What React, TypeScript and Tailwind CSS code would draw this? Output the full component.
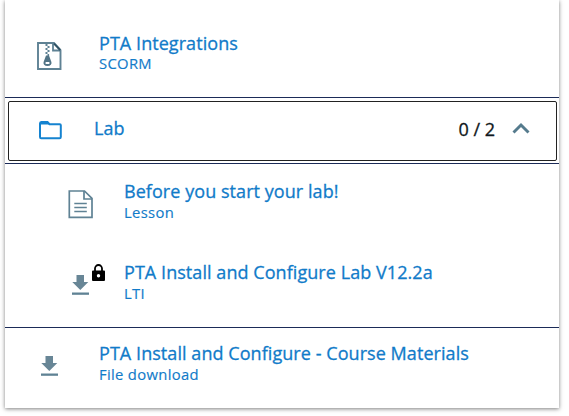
import type { ReactNode } from "react";

const STEEL = "#5f8294";

function ZipIcon() {
  return (
    <svg width="25" height="29" viewBox="0 0 25 29" fill="none" className="block">
      <path d="M1 1H17L23.500 8V27H1Z" stroke={STEEL} strokeWidth="1.900" />
      <path d="M16 1.500V8.500H23.200" stroke={STEEL} strokeWidth="1.800" />
      <path d="M17 1.600L23.200 8" stroke="#2f5163" strokeWidth="1.800" />
      <path d="M8.500 2h2v2h-2zM10.500 4h2v2h-2zM8.500 6h2v2h-2zM10.500 8h2v2h-2zM8.500 10h2v2h-2zM10.500 12h1.600v2h-1.600z" fill={STEEL} />
      <path fillRule="evenodd" d="M9 13.500h3l2.400 6.400c.6 2.200-.8 4-3.900 4s-4.500-1.800-3.900-4ZM8.600 20h3.800v2H8.600Z" fill="#527486" />
    </svg>
  );
}

function LessonIcon() {
  return (
    <svg width="25" height="29" viewBox="0 0 25 29" fill="none" className="block">
      <path d="M1.300 1H16.500L24 8.300V27.300H1.300Z" stroke={STEEL} strokeWidth="1.700" />
      <path d="M16 1V9H24" stroke={STEEL} strokeWidth="1.700" />
      <path d="M6.300 13.500H18.800M6.300 17.500H18.800M6.300 21.500H18.800" stroke={STEEL} strokeWidth="1.700" />
    </svg>
  );
}

function FolderIcon() {
  return (
    <svg width="24" height="20" viewBox="0 0 24 20" fill="none" className="block">
      <path d="M2 3.500V17Q2 18.200 3.200 18.200H21.500Q22.800 18.200 22.800 17V5.200Q22.800 4.200 21.800 4.200H11.500L9.500 2H3.200Q2 2 2 3.500Z" stroke="#1583d0" strokeWidth="2" />
      <path d="M2 2H9.500L11.500 4.500H2Z" fill="#1583d0" />
    </svg>
  );
}

function DownloadIcon() {
  return (
    <svg width="17" height="21" viewBox="0 0 17 21" className="block">
      <path d="M4.500 0H12V7H16.300L8.300 15L.300 7H4.500Z" fill="#688696" />
      <path d="M0 17.500H17V19.800H0Z" fill={STEEL} />
    </svg>
  );
}

function LockIcon() {
  return (
    <svg width="13" height="18" viewBox="0 0 13 18" fill="none" className="block">
      <path d="M3 7V4.500A3.500 3.500 0 0 1 10 4.500V7" stroke="#000" strokeWidth="1.800" />
      <path fillRule="evenodd" d="M1 6.500H12Q13 6.500 13 7.500V16Q13 17 12 17H1Q0 17 0 16V7.500Q0 6.500 1 6.500ZM6.500 10A1.700 1.700 0 1 0 6.500 13.400A1.700 1.700 0 1 0 6.500 10Z" fill="#000" />
    </svg>
  );
}

function Label({ title, kind, kindClass = "leading-[19px]" }: { title: string; kind: string; kindClass?: string }) {
  return (
    <div>
      <div className="text-[18px] leading-[24px] tracking-[0.06px] whitespace-nowrap">{title}</div>
      <div className={`text-[14.8px] tracking-[0.32px] whitespace-nowrap [-webkit-text-stroke:0.15px] ${kindClass}`}>{kind}</div>
    </div>
  );
}

function Item({ className, icon, children }: { className: string; icon: ReactNode; children: ReactNode }) {
  return (
    <div className={`flex items-start ${className}`}>
      {icon}
      {children}
    </div>
  );
}

export default function App() {
  return (
    <div className="h-[416px] w-[569px] overflow-hidden bg-white pl-[5px] font-['Open_Sans',sans-serif] font-normal text-[#117bc9] [-webkit-text-stroke:0.3px]">
      <div className="h-[408px] w-[554px] bg-white shadow-[0_1px_4px_rgba(0,0,0,0.5)]">
        <Item
          className="h-[98px] border-b border-[#1b2b58] pt-[31px]"
          icon={<div className="w-[94px] pt-[11px] pl-[32px]"><ZipIcon /></div>}
        >
          <Label title="PTA Integrations" kind="SCORM" kindClass="leading-[17px]" />
        </Item>
        <div className="h-[66px] border-b border-[#1b2b58] py-[3px] pr-[2px] pl-[3px]">
          <div className="flex h-[60px] items-start rounded-[2px] border border-[#222] pt-[14px]">
            <div className="w-[85px] pt-[4px] pl-[29px]"><FolderIcon /></div>
            <div className="text-[18px] leading-[24px]">Lab</div>
            <div className="ml-auto flex pr-[26px]">
              <div className="text-[18px] leading-[26px] text-[#101820]">0 / 2</div>
              <svg width="18" height="12" viewBox="0 0 18 12" fill="none" className="mt-[6px] ml-[17px]">
                <path d="M1.500 10.500L9 3L16.500 10.500" stroke="#557b8d" strokeWidth="2.900" />
              </svg>
            </div>
          </div>
        </div>
        <div className="h-[164px] border-b border-[#1b2b58] pt-[15px]">
          <Item className="h-[81px]" icon={<div className="w-[119px] pt-[11px] pl-[63px]"><LessonIcon /></div>}>
            <Label title="Before you start your lab!" kind="Lesson" />
          </Item>
          <Item
            className="h-[67px]"
            icon={
              <div className="flex w-[119px] items-start pt-[3px] pl-[67px]">
                <div className="pt-[12px]"><DownloadIcon /></div>
                <div className="mt-px ml-[3px]"><LockIcon /></div>
              </div>
            }
          >
            <Label title="PTA Install and Configure Lab V12.2a" kind="LTI" />
          </Item>
        </div>
        <Item className="h-[80px] pt-[13px]" icon={<div className="w-[94px] pt-[15px] pl-[36px]"><DownloadIcon /></div>}>
          <Label title="PTA Install and Configure - Course Materials" kind="File download" />
        </Item>
      </div>
    </div>
  );
}
